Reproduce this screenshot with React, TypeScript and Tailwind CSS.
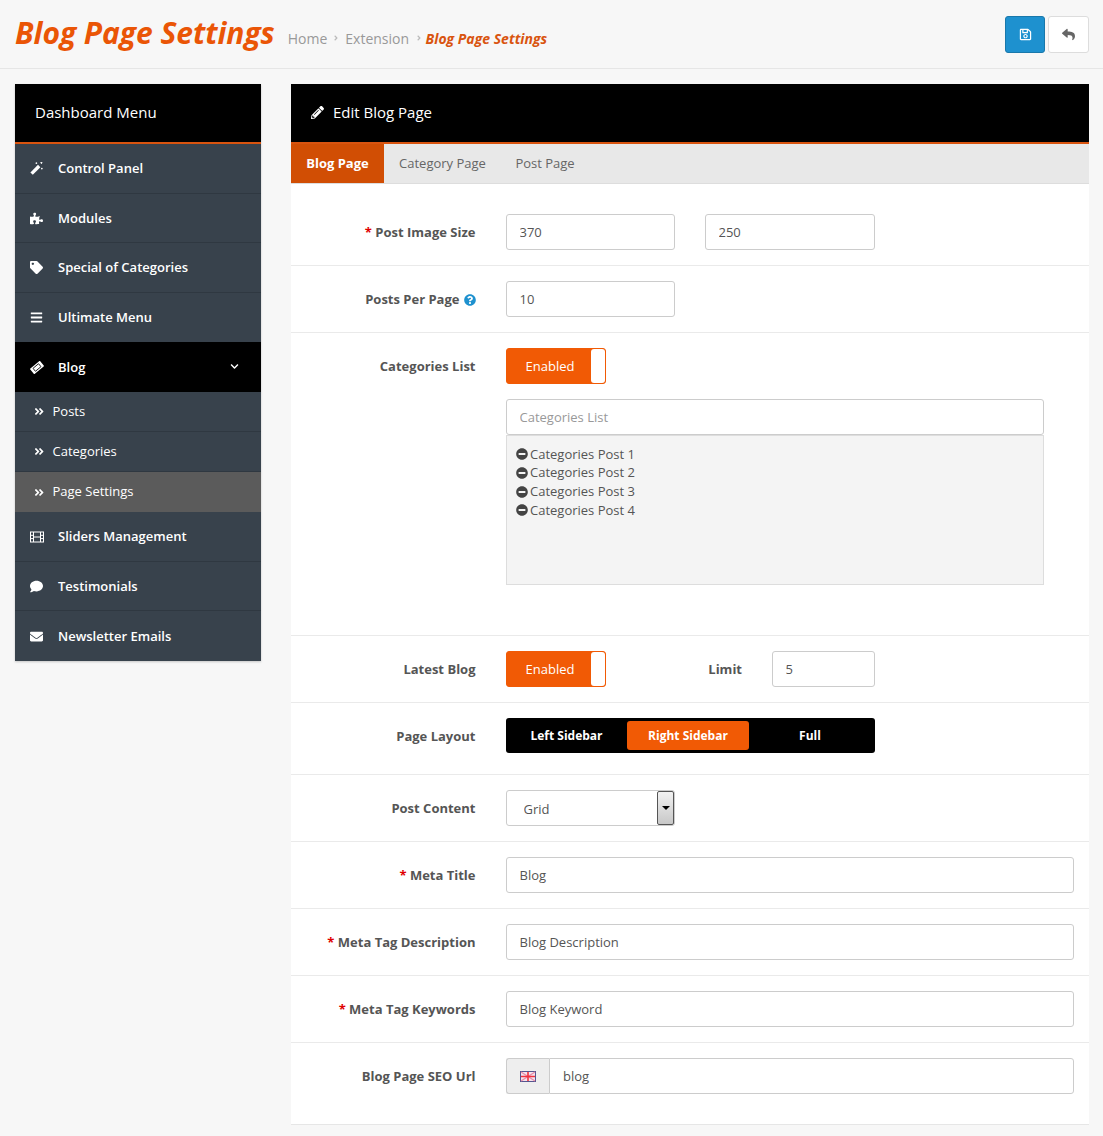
import React from 'react';
import {
  FaPuzzlePiece, FaTag, FaBars, FaComment, FaEnvelope,
  FaAngleDoubleRight, FaChevronDown, FaPencilAlt, FaRegSave, FaReply, FaQuestionCircle, FaMinusCircle, FaAngleRight,
} from 'react-icons/fa';

const MagicIcon = () => (
  <svg width="13" height="13" viewBox="0 0 13 13" fill="#fff">
    <path d="M0.4 10.4L8 2.8L10.4 5.2L2.8 12.8Z" />
    <path d="M5.6 1.2h1.6M6.4 0.4v1.6M10.4 0.6h2M11.4 0v2M11 6.6h1.6M11.8 5.8v1.6" stroke="#fff" strokeWidth="0.9" />
  </svg>
);

const TicketIcon = () => (
  <svg width="14" height="13" viewBox="0 0 14 13">
    <g transform="rotate(-40 7 6.5)">
      <rect x="0.5" y="3" width="13" height="7" rx="0.8" fill="#fff" />
      <rect x="3.4" y="4.6" width="7.2" height="3.8" fill="none" stroke="#000" strokeWidth="0.8" />
    </g>
  </svg>
);

const FilmIcon = () => (
  <svg width="14" height="12" viewBox="0 0 14 12" fill="none" stroke="#fff" strokeWidth="1">
    <rect x="0.5" y="1" width="13" height="10" />
    <path d="M3.5 1V11M10.5 1V11M0.5 4.3H3.5M0.5 7.6H3.5M10.5 4.3H13.5M10.5 7.6H13.5M3.5 6H10.5" />
  </svg>
);

const MenuItem: React.FC<{ icon: React.ReactNode; label: string; h: string; active?: boolean; border?: boolean }> = ({ icon, label, h, active, border = true }) => (
  <div className={`flex items-center pl-[15px] pr-[22px] font-semibold text-[13px] text-white ${h} ${active ? 'bg-black pt-px' : ''} ${border ? 'border-b border-[#2f3841]' : ''}`}>
    <span className="w-[28px] flex items-center text-[13px]">{icon}</span>
    <span className="flex-1">{label}</span>
    {active && <FaChevronDown className="text-[9px] -mt-[2px]" />}
  </div>
);

const SubItem: React.FC<{ label: string; active?: boolean; border?: boolean }> = ({ label, active, border = true }) => (
  <div className={`flex items-center pl-[19px] text-[13px] text-white h-[40px] ${active ? 'bg-[#5b5b5b]' : ''} ${border ? 'border-b border-[#2f3841]' : ''}`}>
    <FaAngleDoubleRight className="text-[11px] w-[18.5px] pr-[8px]" />
    <span>{label}</span>
  </div>
);

const Label: React.FC<{ children: React.ReactNode; required?: boolean }> = ({ children, required }) => (
  <label className="w-[185px] shrink-0 pr-[0.5px] text-right font-bold text-[13px] text-[#555] leading-[36px]">
    {required && <span className="text-[#e00000]">* </span>}
    {children}
  </label>
);

const TextInput: React.FC<{ value?: string; placeholder?: string; className: string }> = ({ value, placeholder, className }) => (
  <input
    readOnly
    value={value}
    placeholder={placeholder}
    className={`block h-[36px] px-[12.5px] bg-white border border-[#ccc] rounded-[3px] text-[13px] text-[#555] placeholder:text-[#999] outline-none ${className}`}
  />
);

const Toggle = () => (
  <div className="flex h-[36px] w-[100px] bg-[#f15a05] rounded-[3px] border border-[#f15a05] text-white text-[13px]">
    <span className="w-[84px] flex items-center justify-center pl-[2px] pt-px">Enabled</span>
    <span className="flex-1 bg-white rounded-[3px]" />
  </div>
);

const Row: React.FC<{ children: React.ReactNode; className?: string }> = ({ children, className = 'py-[15px]' }) => (
  <div className={`flex gap-[30px] pr-[15px] border-b border-[#eaeaea] ${className}`}>{children}</div>
);

const UkFlag = () => (
  <svg width="16" height="11" viewBox="0 0 16 11">
    <rect x="0.5" y="0.5" width="15" height="10" fill="#f3e4ee" stroke="#57558f" />
    <path d="M1 1L15 10M15 1L1 10" stroke="#e88aa6" strokeWidth="1.2" />
    <path d="M8 1V10M1 5.5H15" stroke="#f0323e" strokeWidth="1.6" />
  </svg>
);

export default function App() {
  return (
    <div className="min-h-[1136px] bg-[#f7f7f7] text-[#555]" style={{ fontFamily: '"Open Sans", sans-serif' }}>
      <header className="h-[69px] border-b border-[#e6e6e6] pl-[15px] pr-[14px] flex items-center">
        <h1 className="text-[30px] font-bold italic tracking-[-0.05px] text-[#ea5506] leading-none -mt-[2px]">Blog Page Settings</h1>
        <nav className="flex items-center ml-[13px] mt-[8px] text-[14px] text-[#999]">
          <span>Home</span>
          <FaAngleRight className="text-[8px] mx-[5px] text-[#bbb]" />
          <span>Extension</span>
          <FaAngleRight className="text-[8px] ml-[6px] mr-[2.5px] text-[#bbb]" />
          <span className="font-bold italic text-[#d9540f]">Blog Page Settings</span>
        </nav>
        <div className="ml-auto flex gap-[3px]">
          <button className="w-[40px] h-[37px] rounded-[3px] bg-[#1e91cf] border border-[#1978ab] flex items-center justify-center text-white text-[13px]"><FaRegSave /></button>
          <button className="w-[41px] h-[37px] rounded-[3px] bg-white border border-[#ddd] flex items-center justify-center text-[#666] text-[13px]"><FaReply /></button>
        </div>
      </header>

      <div className="flex items-start gap-[30px] pl-[15px] pr-[14px] pt-[15px]">
        <aside className="w-[246px] shrink-0 bg-[#38424c] shadow-[0_1px_2px_rgba(0,0,0,0.2)]">
          <div className="h-[60px] bg-black border-b-2 border-[#d9540f] text-white text-[15px] flex items-center pl-[20px] pb-[1px]">Dashboard Menu</div>
          <MenuItem icon={<MagicIcon />} label="Control Panel" h="h-[50px]" />
          <MenuItem icon={<FaPuzzlePiece />} label="Modules" h="h-[49px] pt-px" />
          <MenuItem icon={<FaTag />} label="Special of Categories" h="h-[50px]" />
          <MenuItem icon={<FaBars />} label="Ultimate Menu" h="h-[49px]" border={false} />
          <MenuItem icon={<TicketIcon />} label="Blog" h="h-[50px]" active border={false} />
          <SubItem label="Posts" />
          <SubItem label="Categories" />
          <SubItem label="Page Settings" active border={false} />
          <MenuItem icon={<FilmIcon />} label="Sliders Management" h="h-[50px]" />
          <MenuItem icon={<FaComment />} label="Testimonials" h="h-[49px] pt-px" />
          <MenuItem icon={<FaEnvelope />} label="Newsletter Emails" h="h-[50px] pt-px" border={false} />
        </aside>

        <main className="flex-1 bg-white border-b border-[#e6e6e6]">
          <div className="h-[60px] bg-black border-b-2 border-[#d9540f] text-white text-[15px] flex items-center pl-[20px] gap-[9px] pb-[1px]">
            <FaPencilAlt className="text-[13px]" />
            <span>Edit Blog Page</span>
          </div>
          <div className="h-[40px] bg-[#e8e8e8] flex text-[13px] text-[#666] border-b border-[#ddd]">
            <div className="w-[93px] bg-[#d14e04] text-white font-bold flex items-center justify-center">Blog Page</div>
            <div className="w-[117px] flex items-center justify-center">Category Page</div>
            <div className="w-[90px] pr-[6px] flex items-center justify-center ml-[2px]">Post Page</div>
          </div>

          <Row className="pt-[30px] pb-[15px]">
            <Label required>Post Image Size</Label>
            <TextInput value="370" className="w-[169px]" />
            <TextInput value="250" className="w-[170px]" />
          </Row>
          <Row>
            <label className="w-[185px] shrink-0 pt-px pr-[0.5px] flex items-center justify-end gap-[4px] font-bold text-[13px] text-[#555] h-[36px]">
              Posts Per Page <FaQuestionCircle className="text-[12px] text-[#1e91cf]" />
            </label>
            <TextInput value="10" className="w-[169px]" />
          </Row>
          <Row className="pt-[15px] pb-[50px]">
            <Label>Categories List</Label>
            <div>
              <Toggle />
              <TextInput placeholder="Categories List" className="w-[538px] mt-[15px]" />
              <div className="w-[538px] h-[150px] bg-[#f4f4f4] border border-[#ddd] pt-[9px] pl-[9px] text-[13px]">
                {['Categories Post 1', 'Categories Post 2', 'Categories Post 3', 'Categories Post 4'].map(name => (
                  <div key={name} className="flex items-center gap-[2px] h-[18.7px]">
                    <FaMinusCircle className="text-[12px] text-[#444]" />
                    <span>{name}</span>
                  </div>
                ))}
              </div>
            </div>
          </Row>
          <Row>
            <Label>Latest Blog</Label>
            <Toggle />
            <div className="w-[136px] text-right font-bold text-[13px] text-[#555] leading-[36px] -ml-[30px]">Limit</div>
            <TextInput value="5" className="w-[103px]" />
          </Row>
          <Row className="pt-[15px] pb-[20px]">
            <Label>Page Layout</Label>
            <div className="w-[369px] h-[35px] bg-black rounded-[3px] flex items-center text-white font-bold text-[12px]">
              <div className="w-[121px] text-center">Left Sidebar</div>
              <div className="w-[122px] h-[29px] bg-[#f15a05] rounded-[3px] flex items-center justify-center">Right Sidebar</div>
              <div className="flex-1 text-center pr-[4px]">Full</div>
            </div>
          </Row>
          <Row>
            <Label>Post Content</Label>
            <div className="relative w-[169px]">
              <TextInput value="Grid" className="w-[169px] pl-[16.5px] pt-[2px]" />
              <div className="absolute right-[1px] top-[1px] w-[17px] h-[34px] border border-[#555] rounded-[2px] bg-gradient-to-b from-[#f2f2f2] to-[#c8c8c8] flex items-center justify-center">
                <span className="border-x-[4px] border-x-transparent border-t-[4px] border-t-black" />
              </div>
            </div>
          </Row>
          <Row>
            <Label required>Meta Title</Label>
            <TextInput value="Blog" className="flex-1" />
          </Row>
          <Row>
            <Label required>Meta Tag Description</Label>
            <TextInput value="Blog Description" className="flex-1" />
          </Row>
          <Row>
            <Label required>Meta Tag Keywords</Label>
            <TextInput value="Blog Keyword" className="flex-1" />
          </Row>
          <div className="flex gap-[30px] pr-[15px] pt-[15px] pb-[30px]">
            <Label>Blog Page SEO Url</Label>
            <div className="flex-1 flex h-[36px]">
              <span className="w-[43px] bg-[#eee] border border-r-0 border-[#ccc] rounded-l-[3px] flex items-center justify-center"><UkFlag /></span>
              <input readOnly value="blog" className="flex-1 min-w-0 px-[13px] pt-[2px] bg-white border border-[#ccc] rounded-r-[3px] text-[13px] text-[#555] outline-none" />
            </div>
          </div>
        </main>
      </div>
    </div>
  );
}
